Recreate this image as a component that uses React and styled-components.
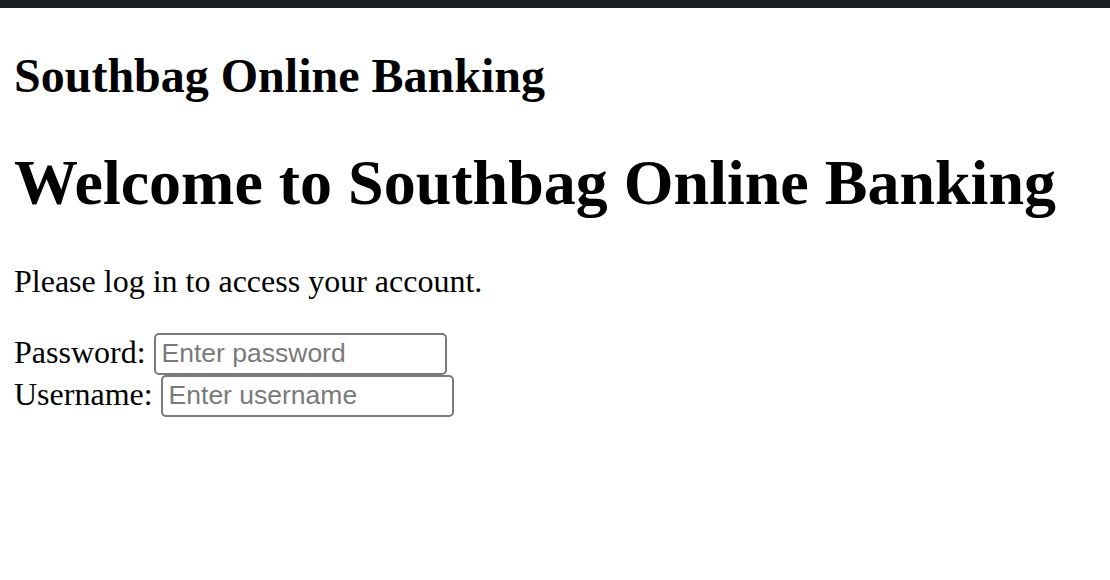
import React from "react";
import styled, { createGlobalStyle } from "styled-components";

const Global = createGlobalStyle`
  html, body { margin: 0; padding: 0; background: #ffffff; }
  body {
    font-family: "Liberation Serif", "Times New Roman", serif;
    color: #000;
  }
`;

const TopBar = styled.div`
  height: 8px;
  background: #1f1f27;
`;

const Page = styled.main`
  padding: 0 14px 0 14px;
  font-size: 32px;
  display: flow-root;
`;

const SiteTitle = styled.h2`
  font-size: 48px;
  font-weight: bold;
  margin: 39.8px 0 0;
  line-height: normal;
`;

const Welcome = styled.h1`
  font-size: 64px;
  font-weight: bold;
  margin: 42.9px 0 0;
  line-height: normal;
`;

const Intro = styled.p`
  font-size: 32px;
  margin: 42.9px 0 33px;
`;

const Form = styled.form`
  margin: 0;
`;

const Label = styled.label`
  font-size: 32px;
`;

const Field = styled.input`
  box-sizing: border-box;
  width: 293px;
  height: 42px;
  padding: 2px 6px;
  border: 2px solid #7a7a7a;
  border-radius: 5px;
  font-family: "Liberation Sans", Arial, sans-serif;
  font-size: 26.5px;
  color: #000;
  vertical-align: baseline;
  &::placeholder { color: #7a7a7a; }
`;

export default function App() {
  return (
    <>
      <Global />
      <TopBar />
      <Page>
        <SiteTitle>Southbag Online Banking</SiteTitle>
        <Welcome>Welcome to Southbag Online Banking</Welcome>
        <Intro>Please log in to access your account.</Intro>
        <Form onSubmit={(e) => e.preventDefault()}>
          <Label htmlFor="password">Password: </Label>
          <Field id="password" type="password" placeholder="Enter password" />
          <br />
          <Label htmlFor="username">Username: </Label>
          <Field id="username" type="text" placeholder="Enter username" />
        </Form>
      </Page>
    </>
  );
}
